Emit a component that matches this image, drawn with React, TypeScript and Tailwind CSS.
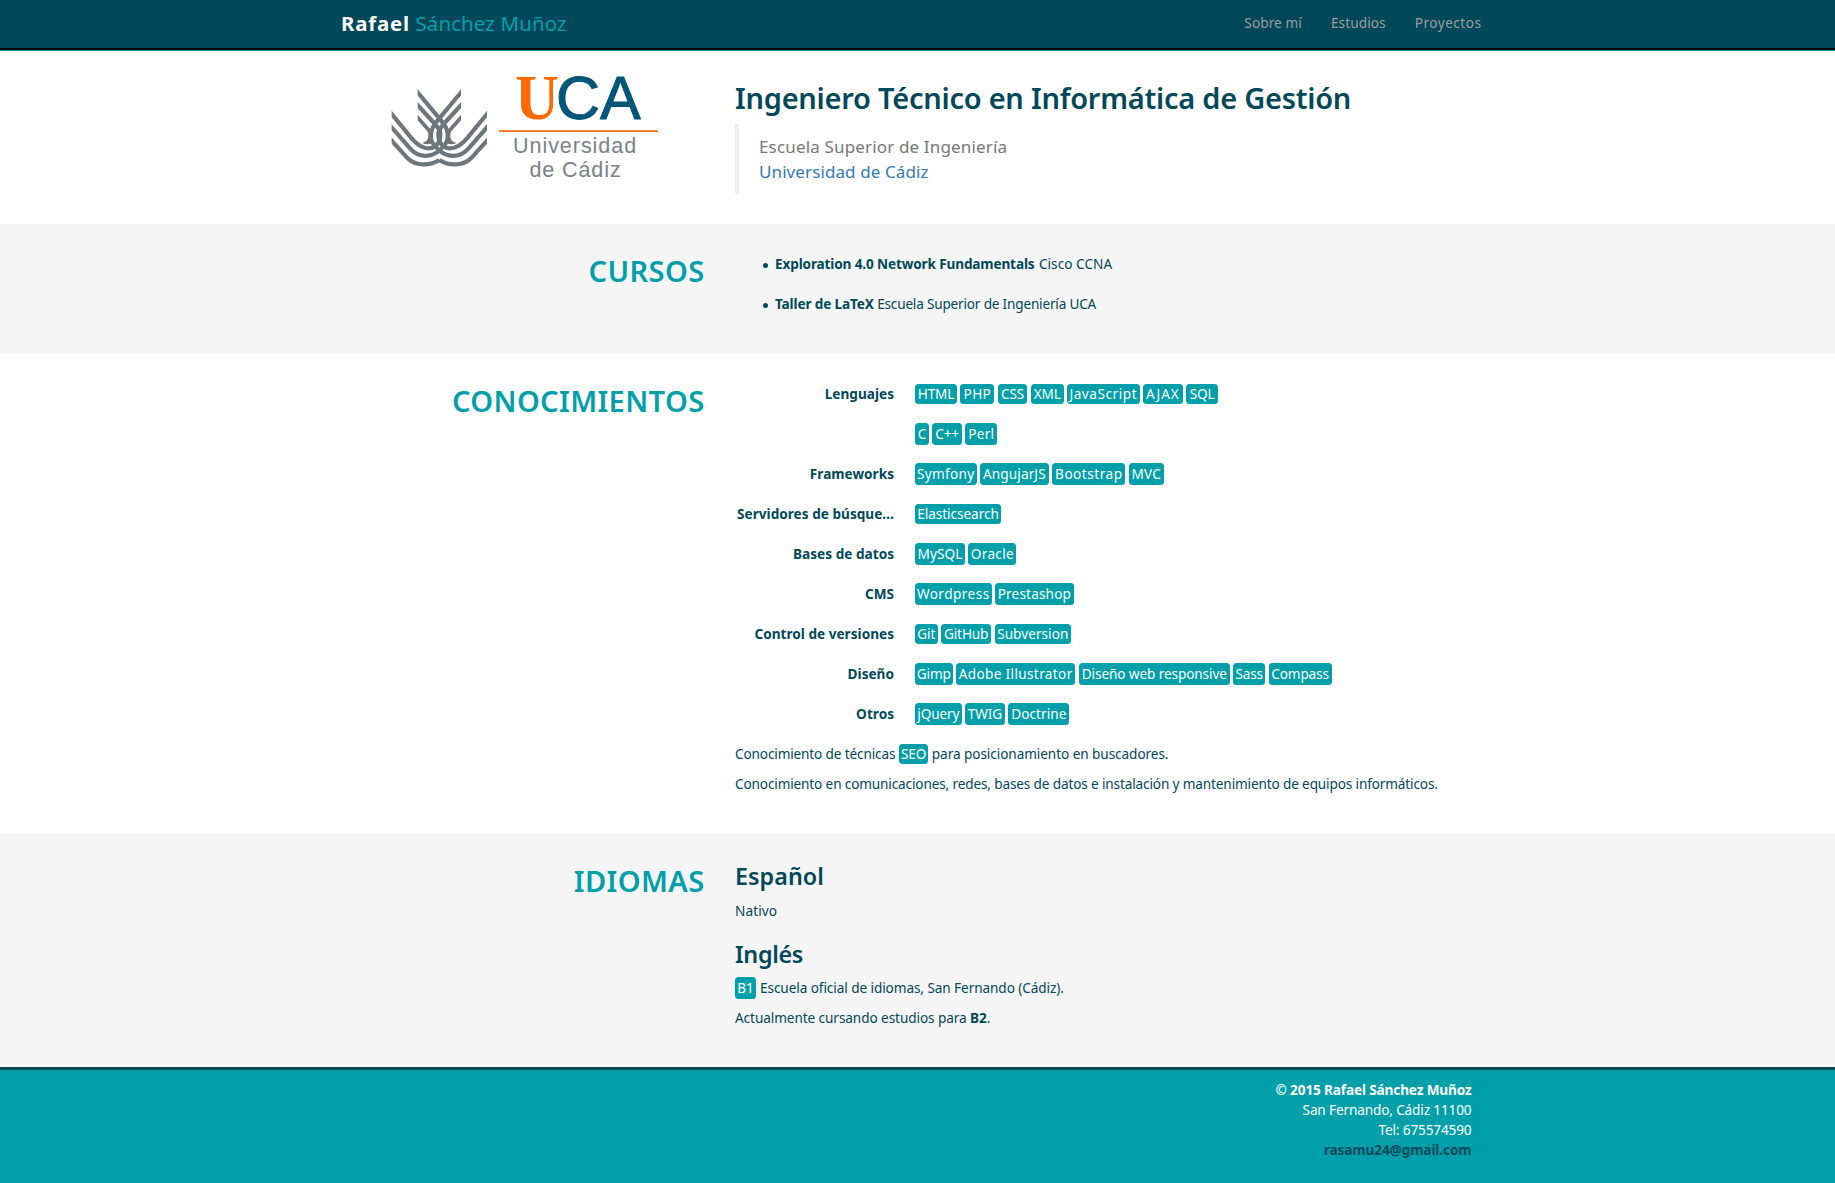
import type { ReactNode } from "react";

type Tag = [label: string, className: string];

const skills: { term: string; short?: boolean; tags: Tag[] }[] = [
  {
    term: "Lenguajes",
    short: true,
    tags: [
      ["HTML", "w-[42px]"],
      ["PHP", "w-[34px] tracking-[0.4px]"],
      ["CSS", "w-[29.5px]"],
      ["XML", "w-[33px]"],
      ["JavaScript", "w-[72.5px] tracking-[0.55px]"],
      ["AJAX", "w-[40px] tracking-[1px]"],
      ["SQL", "w-[31.5px]"],
    ],
  },
  {
    term: "",
    tags: [
      ["C", "w-[14px]"],
      ["C++", "w-[29.5px]"],
      ["Perl", "w-[32px] tracking-[0.3px]"],
    ],
  },
  {
    term: "Frameworks",
    tags: [
      ["Symfony", "w-[61.5px] tracking-[0.3px]"],
      ["AngujarJS", "w-[69px] tracking-[0.1px]"],
      ["Bootstrap", "w-[73px] tracking-[0.5px]"],
      ["MVC", "w-[35px] tracking-[0.2px]"],
    ],
  },
  { term: "Servidores de búsque…", short: true, tags: [["Elasticsearch", "w-[86px] tracking-[-0.05px]"]] },
  {
    term: "Bases de datos",
    tags: [
      ["MySQL", "w-[50px] tracking-[0.1px]"],
      ["Oracle", "w-[48px] tracking-[0.3px]"],
    ],
  },
  {
    term: "CMS",
    tags: [
      ["Wordpress", "w-[76.5px] tracking-[0.45px]"],
      ["Prestashop", "w-[79px] tracking-[0.15px]"],
    ],
  },
  {
    term: "Control de versiones",
    short: true,
    tags: [
      ["Git", "w-[22.5px]"],
      ["GitHub", "w-[50.5px]"],
      ["Subversion", "w-[76px] tracking-[0.05px]"],
    ],
  },
  {
    term: "Diseño",
    tags: [
      ["Gimp", "w-[37.5px]"],
      ["Adobe Illustrator", "w-[119.5px] tracking-[0.35px]"],
      ["Diseño web responsive", "w-[151px] tracking-[-0.1px]"],
      ["Sass", "w-[32px]"],
      ["Compass", "w-[63px]"],
    ],
  },
  {
    term: "Otros",
    tags: [
      ["jQuery", "w-[46.5px]"],
      ["TWIG", "w-[40px]"],
      ["Doctrine", "w-[61px] tracking-[0.05px]"],
    ],
  },
];

function Chip({ label, className, short }: { label: string; className: string; short?: boolean }) {
  return (
    <span
      className={`inline-flex shrink-0 items-center justify-center rounded-[3.5px] bg-[#009faa] text-white ${className} ${
        short ? "h-[20.5px]" : "h-[22px]"
      }`}
    >
      {label}
    </span>
  );
}

function Section({ title, className, children }: { title: string; className: string; children: ReactNode }) {
  return (
    <section className={className}>
      <div className="mx-auto flex w-[1170px]">
        <h2 className="w-[372px] shrink-0 pt-[30px] text-right text-[29px] leading-[33px] font-[560] tracking-[0.4px] text-[#009faa]">
          {title}
        </h2>
        <div className="ml-[30.5px] min-w-0 flex-1">{children}</div>
      </div>
    </section>
  );
}

const leaf = [
  "M14 175 L68 235 C95 262 140 255 163 240",
  "M14 135 L75 205 C100 234 140 234 163 211 C185 192 190 180 188 163 C187 145 180 136 163 115 L92 30",
  "M14 95 L80 175 C102 203 130 211 148 201 C163 190 166 180 166 165 C166 150 160 144 150 132 L92 69",
];

function UcaLogo() {
  return (
    <svg className="ml-[50px] h-[110px] w-[285px] overflow-visible" viewBox="383 70 285 110" role="img" aria-label="Universidad de Cádiz">
      <defs>
        <clipPath id="wings">
          <path d="M20 0 H306 V270 H20 Z" />
        </clipPath>
        <clipPath id="core">
          <path d="M0 90 H98 V0 H228 V90 H320 V270 H0 Z" />
        </clipPath>
      </defs>
      <g transform="translate(385 80) scale(0.3333)" fill="none" stroke="#6e767b" strokeWidth="12.5">
        <g clipPath="url(#wings)">
          <g clipPath="url(#core)">
            {["", "translate(326 0) scale(-1 1)"].map((t) => (
              <g key={t} transform={t}>
                {leaf.map((d) => (
                  <path key={d} d={d} />
                ))}
                <path
                  d="M98 104 L136 147 C143 160 143 175 145 190 C135 193 122 194 111 189 C126 186 131 178 130 163 C130 158 127 154 124 151 L98 121 Z"
                  fill="#6e767b"
                  stroke="none"
                />
              </g>
            ))}
          </g>
        </g>
      </g>
      <text x="515" y="118.8" fontSize="64" fontWeight="700" textLength="44" lengthAdjust="spacingAndGlyphs" fill="#ff6a00" fontFamily="Liberation Serif, serif">
        U
      </text>
      <g fill="#005677" stroke="#005677" strokeWidth="1" fontSize="61" fontFamily="Liberation Sans, sans-serif">
        <text x="556" y="119">
          C
        </text>
        <text x="600" y="119">
          A
        </text>
      </g>
      <path d="M499 131.2 H658" stroke="#ff6a1a" strokeWidth="1.7" />
      <g fill="#7a8287" fontFamily="Liberation Sans, sans-serif" fontSize="21.5">
        <text x="513" y="152.7" textLength="123">
          Universidad
        </text>
        <text x="529.5" y="176.5" textLength="91">
          de Cádiz
        </text>
      </g>
    </svg>
  );
}

export default function App() {
  return (
    <div className="flex min-h-[1183px] flex-col bg-white font-['Noto_Sans',sans-serif] text-[13.6px] leading-5 tracking-[-0.14px] text-[#00485a]">
      <header className="h-[51px] border-b border-[#009faa] bg-[#00485a]">
        <div className="h-[50px] border-b-2 border-[#080808]">
          <div className="mx-auto flex h-[46px] w-[1170px] items-center justify-between pr-[21px] pl-[8.5px]">
            <div className="text-[20.4px] tracking-[0.15px] whitespace-nowrap text-[#009faa]">
              <b className="font-bold tracking-[0.85px] text-white">Rafael</b> Sánchez Muñoz
            </div>
            <nav className="flex text-[#9d9d9d]">
              <a className="mr-[29px] tracking-[0.1px]">Sobre mí</a>
              <a className="mr-[29px] tracking-[0.1px]">Estudios</a>
              <a className="tracking-[0.5px]">Proyectos</a>
            </nav>
          </div>
        </div>
      </header>

      <section className="h-[173px]">
        <div className="mx-auto flex w-[1170px]">
          <div className="w-[402.5px] shrink-0 pt-[19px]">
            <UcaLogo />
          </div>
          <div>
            <h1 className="pt-[30px] text-[29px] leading-[33px] font-[560] tracking-[-0.25px] whitespace-nowrap">
              Ingeniero Técnico en Informática de Gestión
            </h1>
            <blockquote className="mt-[10px] h-[70px] border-l-4 border-[#eeeeee] px-5 py-2.5 text-[17px] leading-[25px] tracking-[0.16px] text-[#777777]">
              <p>Escuela Superior de Ingeniería</p>
              <a className="tracking-[0.1px] text-[#337ab7]">Universidad de Cádiz</a>
            </blockquote>
          </div>
        </div>
      </section>

      <Section title="CURSOS" className="h-[130px] bg-[#f5f5f5]">
        <ul className="flex flex-col gap-5 pt-[30px]">
          <li className="flex items-center">
            <span className="mt-0.5 mr-[7.5px] ml-[27.5px] size-[5px] rounded-full bg-[#00485a]" />
            <span>
              <b className="font-bold">Exploration 4.0 Network Fundamentals</b>{" "}
              <span className="ml-px tracking-[0.05px]">Cisco CCNA</span>
            </span>
          </li>
          <li className="flex items-center">
            <span className="mt-0.5 mr-[7.5px] ml-[27.5px] size-[5px] rounded-full bg-[#00485a]" />
            <span>
              <b className="font-bold">Taller de LaTeX</b>{" "}
              <span className="tracking-[-0.19px]">Escuela Superior de Ingeniería UCA</span>
            </span>
          </li>
        </ul>
      </Section>

      <Section title="CONOCIMIENTOS" className="h-[480px]">
        <dl className="pt-5">
          {skills.map(({ term, short, tags }) => (
            <div key={term} className="flex h-10 items-center">
              <dt className="w-40 shrink-0 pr-px text-right font-bold tracking-[0.02px] whitespace-nowrap">{term}</dt>
              <dd className="ml-5 flex gap-[3.4px] whitespace-nowrap">
                {tags.map(([label, chipClass]) => (
                  <Chip key={label} label={label} className={chipClass} short={short} />
                ))}
              </dd>
            </div>
          ))}
        </dl>
        <p className="mt-2.5 flex h-5 items-center gap-[3.5px]">
          <span>Conocimiento de técnicas</span>
          <Chip label="SEO" className="w-[29.5px]" short />
          <span className="tracking-[-0.07px]">para posicionamiento en buscadores.</span>
        </p>
        <p className="mt-2.5 whitespace-nowrap">
          Conocimiento en comunicaciones, redes, bases de datos e instalación y mantenimiento de equipos informáticos.
        </p>
      </Section>

      <Section title="IDIOMAS" className="h-[233px] bg-[#f5f5f5]">
        <h3 className="pt-[29px] text-[23.3px] leading-[26px] font-[560] tracking-[0.05px]">Español</h3>
        <p className="mt-3 tracking-[0.1px]">Nativo</p>
        <h3 className="mt-5 text-[23.3px] leading-[26px] font-[560] tracking-[-0.3px]">Inglés</h3>
        <p className="mt-[11px] flex h-5 items-center gap-[4px]">
          <Chip label="B1" className="w-[21px]" />
          <span className="tracking-[-0.08px]">Escuela oficial de idiomas, San Fernando (Cádiz).</span>
        </p>
        <p className="mt-2.5 tracking-[-0.08px]">
          Actualmente cursando estudios para <b className="font-bold">B2</b>.
        </p>
      </Section>

      <footer className="flex-1 border-t-3 border-[#00485a] bg-[#009faa]">
        <div className="mx-auto w-[1170px] pt-2.5 pr-[31px] text-right text-white">
          <p className="font-bold">© 2015 Rafael Sánchez Muñoz</p>
          <p>San Fernando, Cádiz 11100</p>
          <p>
            <span className="underline decoration-[#b0707a]/60 decoration-dotted decoration-1 underline-offset-4">Tel:</span>{" "}
            675574590
          </p>
          <p className="font-bold tracking-[-0.1px] text-[#00485a]">rasamu24@gmail.com</p>
        </div>
      </footer>
    </div>
  );
}
